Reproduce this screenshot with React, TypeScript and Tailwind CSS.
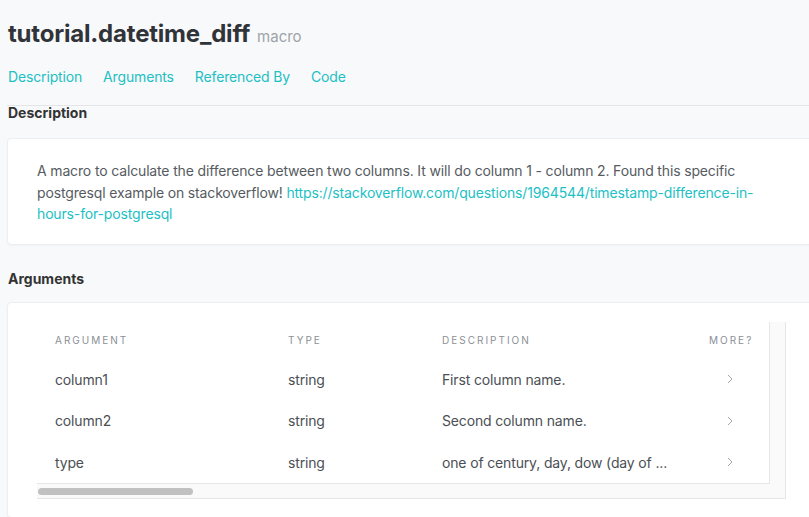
const rows = [
  { name: 'column1', type: 'string', description: 'First column name.' },
  { name: 'column2', type: 'string', description: 'Second column name.' },
  { name: 'type', type: 'string', description: 'one of century, day, dow (day of ...' },
]

const tabs = ['Description', 'Arguments', 'Referenced By', 'Code']

function Chevron() {
  return (
    <svg width="6" height="10" viewBox="0 0 6 10" fill="none" className="text-[#a3a7ad]">
      <polyline points="1,1 5,5 1,9" stroke="currentColor" strokeWidth="1" />
    </svg>
  )
}

function SectionTitle({ children }: { children: string }) {
  return <h2 className="px-px text-[14px] leading-[14px] font-bold text-[#333]">{children}</h2>
}

function Card({ children, className = '' }: { children: React.ReactNode; className?: string }) {
  return (
    <div className={`w-[809px] rounded-[4px] border border-[#eceef1] bg-white shadow-[0_1px_2px_rgba(0,0,0,0.03)] ${className}`}>
      {children}
    </div>
  )
}

export default function App() {
  return (
    <div className="h-[517px] w-[809px] overflow-hidden bg-[#f8f9fa] font-['Inter',sans-serif]">
      <div className="w-[840px] pl-[7px]">
        <div className="flex items-baseline gap-[7px] px-px pt-[18px]">
          <h1 className="text-[24px] leading-[32px] font-bold tracking-[-0.2px] text-[#303338]">tutorial.datetime_diff</h1>
          <span className="text-[15px] text-[#9ea3a9]">macro</span>
        </div>

        <nav className="flex gap-[21px] px-px pt-[18px] text-[14px] leading-[18px] tracking-[-0.15px] text-[#22bfc4]">
          {tabs.map((t) => (
            <a key={t} href="#">{t}</a>
          ))}
        </nav>

        <div className="mt-[19px] border-t border-[#e3e5e8]" />

        <SectionTitle>Description</SectionTitle>

        <Card className="mt-[18px] px-[29px] pt-[21px] pb-[19px]">
          <p className="text-[14px] leading-[21.5px] tracking-[-0.15px] text-[#565b61]">
            A macro to calculate the difference between two columns. It will do column 1 - column 2. Found this specific
            postgresql example on stackoverflow!{' '}
            <a href="#" className="text-[#22bfc4]">
              https://stackoverflow.com/questions/1964544/timestamp-difference-in-hours-for-postgresql
            </a>
          </p>
        </Card>

        <div className="pt-[27px]">
          <SectionTitle>Arguments</SectionTitle>
        </div>

        <Card className="mt-[16px] px-[29px] pt-[19px] pb-[18px]">
          <div className="w-[749px] border-r border-b border-[#e6e6e6] bg-[#fafafa]">
            <div className="flex">
              <div className="w-[734px] border-r border-b border-[#e6e6e6] bg-white pl-[18px]">
                <div className="grid h-[37px] grid-cols-[233px_154px_267px_43px] items-center text-[10px] tracking-[0.2em] text-[#8b9096] uppercase">
                  <span>Argument</span>
                  <span>Type</span>
                  <span>Description</span>
                  <span>More?</span>
                </div>
                {rows.map((r) => (
                  <div key={r.name} className="grid h-[41.5px] grid-cols-[233px_154px_267px_43px] items-center text-[14px] tracking-[-0.15px] text-[#4b4f55]">
                    <span>{r.name}</span>
                    <span>{r.type}</span>
                    <span>{r.description}</span>
                    <span className="flex justify-center pr-px">
                      <Chevron />
                    </span>
                  </div>
                ))}
              </div>
              <div className="w-[15px]" />
            </div>
            <div className="flex h-[14px] items-center pl-px">
              <div className="h-[7px] w-[155px] rounded-full bg-[#c1c1c1]" />
            </div>
          </div>
        </Card>
      </div>
    </div>
  )
}
